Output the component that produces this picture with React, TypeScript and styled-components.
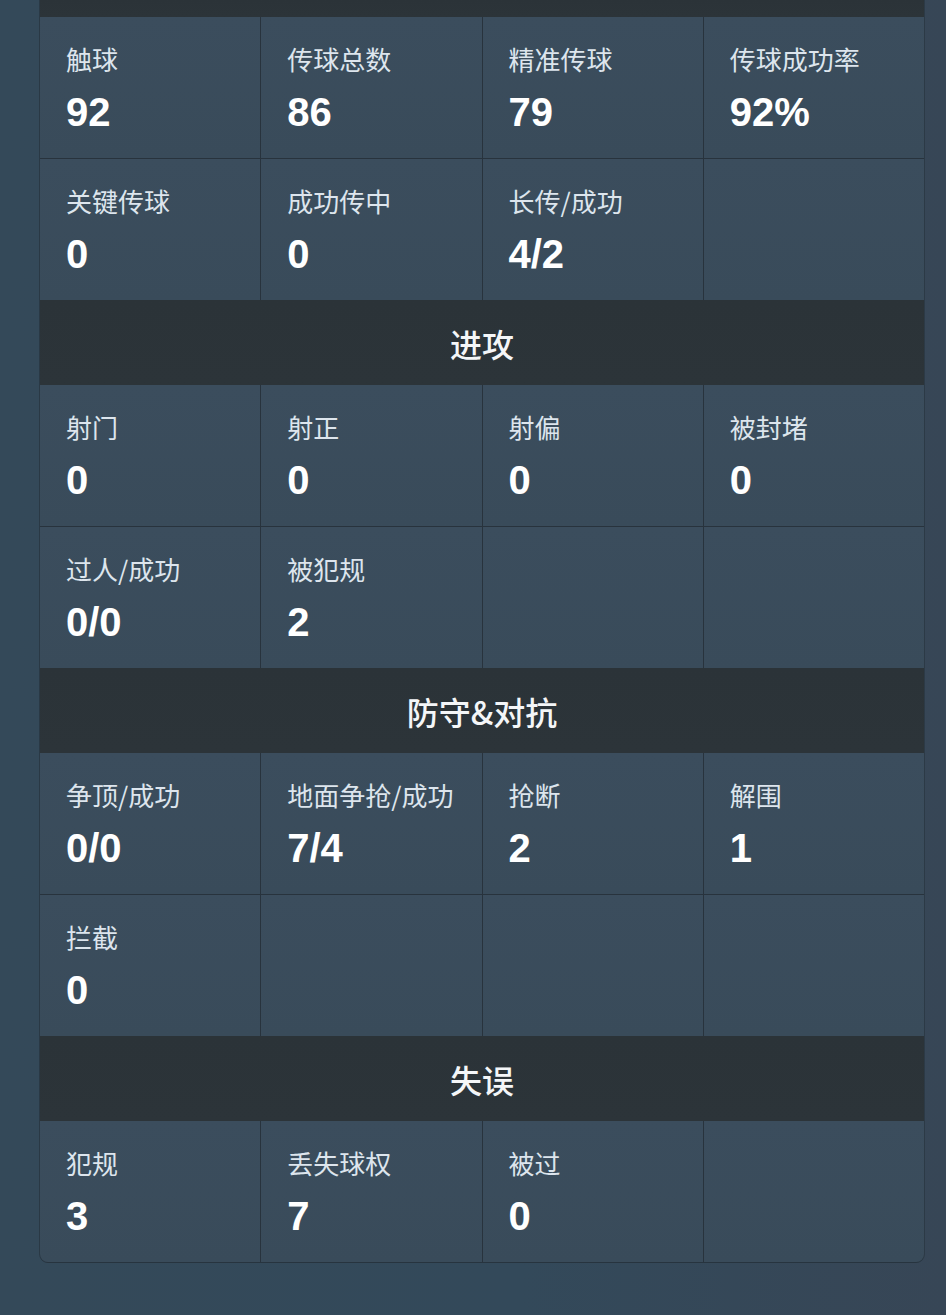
import React from 'react';
import styled, { createGlobalStyle } from 'styled-components';

const GlobalStyle = createGlobalStyle`
  html, body {
    margin: 0;
    padding: 0;
    background: #334656;
  }
  body {
    font-family: 'Noto Sans CJK SC', 'Noto Sans', sans-serif;
  }
`;

const Page = styled.div`
  min-height: 1315px;
  padding: 0 22px 53px 40px;
  background: linear-gradient(90deg, #344959 0%, #33495a 55%, #374656 100%);
  box-sizing: border-box;
`;

const Panel = styled.div`
  width: 884px;
  display: flex;
  flex-direction: column;
  border-radius: 0 0 8px 8px;
  overflow: hidden;
  box-shadow: -1px 0 0 #2a3945, 1px 0 0 #2c3a46, 0 1px 0 #27343f;
`;

const SectionHeader = styled.div<{ $stub?: boolean }>`
  height: ${({ $stub }) => ($stub ? 17 : 85)}px;
  display: flex;
  align-items: center;
  justify-content: center;
  background: linear-gradient(180deg, #2b3338 0%, #2c3439 100%);
  color: #f4f6f8;
  font-size: 32px;
  font-weight: 500;
`;

const Grid = styled.div`
  display: grid;
  grid-template-columns: repeat(4, 1fr);
  grid-auto-rows: 141px;
  gap: 1px;
  background: #28333d;
`;

const Cell = styled.div`
  padding: 24px 0 0 26px;
  background: linear-gradient(180deg, #3b4d5d 0%, #394b5a 100%);
  box-sizing: border-box;
`;

const Label = styled.div`
  font-size: 26px;
  line-height: 36px;
  color: #dde5ed;
  white-space: nowrap;
`;

const Value = styled.div`
  margin-top: 13px;
  font-family: 'Liberation Sans', Arial, sans-serif;
  font-size: 40px;
  line-height: 44px;
  font-weight: 700;
  color: #ffffff;
`;

type Stat = [string, string];

type Section = {
  title: string | null;
  stats: Stat[];
};

const sections: Section[] = [
  {
    title: null,
    stats: [
      ['触球', '92'],
      ['传球总数', '86'],
      ['精准传球', '79'],
      ['传球成功率', '92%'],
      ['关键传球', '0'],
      ['成功传中', '0'],
      ['长传/成功', '4/2'],
    ],
  },
  {
    title: '进攻',
    stats: [
      ['射门', '0'],
      ['射正', '0'],
      ['射偏', '0'],
      ['被封堵', '0'],
      ['过人/成功', '0/0'],
      ['被犯规', '2'],
    ],
  },
  {
    title: '防守&对抗',
    stats: [
      ['争顶/成功', '0/0'],
      ['地面争抢/成功', '7/4'],
      ['抢断', '2'],
      ['解围', '1'],
      ['拦截', '0'],
    ],
  },
  {
    title: '失误',
    stats: [
      ['犯规', '3'],
      ['丢失球权', '7'],
      ['被过', '0'],
    ],
  },
];

const padToRow = (stats: Stat[]) => {
  const rest = (4 - (stats.length % 4)) % 4;
  return [...stats, ...Array.from({ length: rest }, () => null)];
};

const App = () => (
  <>
    <GlobalStyle />
    <Page>
      <Panel>
        {sections.map((section, i) => (
          <React.Fragment key={i}>
            <SectionHeader $stub={!section.title}>{section.title}</SectionHeader>
            <Grid>
              {padToRow(section.stats).map((stat, j) => (
                <Cell key={j}>
                  {stat && (
                    <>
                      <Label>{stat[0]}</Label>
                      <Value>{stat[1]}</Value>
                    </>
                  )}
                </Cell>
              ))}
            </Grid>
          </React.Fragment>
        ))}
      </Panel>
    </Page>
  </>
);

export default App;
